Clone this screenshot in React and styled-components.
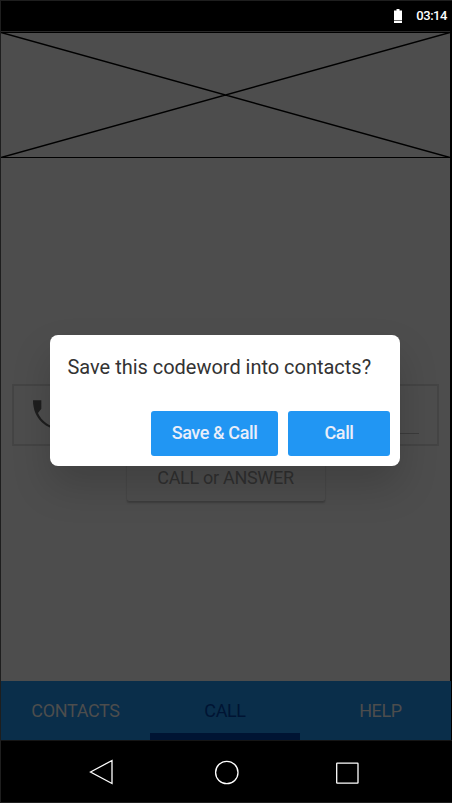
import React from "react";
import styled, { createGlobalStyle } from "styled-components";

const GlobalStyle = createGlobalStyle`
  *, *::before, *::after { box-sizing: border-box; }
  html, body { margin: 0; background: #000; }
  body { font-family: Roboto, sans-serif; overflow: hidden; }
  button { font-family: inherit; margin: 0; padding: 0; cursor: pointer; }
`;

const Phone = styled.div`
  position: relative;
  display: flex;
  flex-direction: column;
  width: 452px;
  height: 803px;
  background: #000;
  border-top: 1px solid #1e1e1e;
  border-bottom: 1px solid #1e1e1e;
  border-left: 1px solid #1e1e1e;
`;

const StatusBar = styled.header`
  display: flex;
  align-items: center;
  justify-content: flex-end;
  gap: 14px;
  height: 30px;
  padding: 0 5px 0 0;
  color: #fff;
  font-size: 13px;
  font-weight: 500;
  letter-spacing: -0.45px;
  line-height: 32px;
`;

const Battery = styled.svg`
  display: block;
  width: 8px;
  height: 14px;
`;

const Screen = styled.main`
  display: flex;
  flex-direction: column;
  width: 449px;
  height: 650px;
  background: #4d4d4d;
  border-top: 1px solid #292929;
`;

const Placeholder = styled.svg`
  display: block;
  width: 449px;
  height: 126px;
`;

const CodewordCard = styled.section`
  display: flex;
  align-items: flex-start;
  width: 427px;
  height: 62px;
  margin: 226px 0 0 11px;
  border: 2px solid #444;
`;

const CallIcon = styled.svg`
  flex: none;
  width: 40px;
  height: 40px;
  margin: 9px 0 0 14px;
  fill: #1e1e1e;
`;

const CodewordInput = styled.div`
  width: 351px;
  height: 48px;
  border-bottom: 1px solid #3b3b3b;
`;

const AnswerButton = styled.button`
  align-self: center;
  width: 198px;
  height: 46px;
  margin-top: 9px;
  border: 0;
  border-radius: 2px;
  background: #4d4d4d;
  color: #303030;
  font-size: 18px;
  font-weight: 400;
  letter-spacing: -0.3px;
  line-height: 46px;
  box-shadow: 0 2px 2px rgba(0, 0, 0, 0.22), 0 0 1px rgba(0, 0, 0, 0.12);
`;

const Tabs = styled.nav`
  display: grid;
  grid-template-columns: 149px 150px 151px;
  width: 450px;
  height: 59px;
  background: #0a2e4a;
`;

const Tab = styled.button`
  height: 59px;
  border: 0;
  border-bottom: 7px solid ${(p) => (p.$active ? "#001433" : "transparent")};
  padding-top: 7px;
  padding-left: ${(p) => p.$shift || 0}px;
  background: transparent;
  color: ${(p) => (p.$active ? "#001433" : "#4d4d4d")};
  font-size: 18px;
  font-weight: 400;
  letter-spacing: -0.35px;
`;

const SystemNav = styled.footer`
  flex: 1;
  border-top: 1px solid #151515;
`;

const NavIcons = styled.svg`
  display: block;
  width: 451px;
  height: 60px;
  fill: none;
  stroke: #fff;
  stroke-width: 1.3;
`;

const Dialog = styled.section`
  position: absolute;
  top: 334px;
  left: 49px;
  display: flex;
  flex-direction: column;
  justify-content: space-between;
  width: 350px;
  height: 131px;
  padding: 20px 10px 10px 17.5px;
  border-radius: 8px;
  background: #fff;
  box-shadow: 0 20px 38px rgba(0, 0, 0, 0.17);
`;

const Question = styled.h1`
  margin: 0;
  color: #333;
  font-size: 20px;
  font-weight: 400;
  letter-spacing: -0.02px;
  line-height: 24px;
  white-space: nowrap;
`;

const Actions = styled.div`
  display: flex;
  justify-content: flex-end;
  gap: 10px;
`;

const Action = styled.button`
  width: ${(p) => p.$width}px;
  height: 45px;
  border: 0;
  border-radius: 3px;
  background: #2196f3;
  color: #e9eefa;
  font-size: 18px;
  font-weight: 500;
  letter-spacing: -0.4px;
  line-height: 43px;
  padding-bottom: 2px;
`;

export default function App() {
  return (
    <>
      <GlobalStyle />
      <Phone>
        <StatusBar>
          <Battery viewBox="0 0 8 14">
            <path d="M2.5 0h3v1.5H8V11H0V1.5h2.5z" fill="#fff" />
            <path d="M0 11h8v1H0z" fill="#666" />
            <path d="M0 12h8v2H0z" fill="#fff" />
          </Battery>
          <span>03:14</span>
        </StatusBar>
        <Screen>
          <Placeholder viewBox="0 0 449 126">
            <path d="M0 .5H449M0 125.5H449" stroke="#000" fill="none" />
            <path
              d="M0 .5L449 125.5M0 125.5L449 .5"
              stroke="#000"
              strokeWidth="1.5"
              fill="none"
            />
          </Placeholder>
          <CodewordCard>
            <CallIcon viewBox="0 0 24 24">
              <path d="M3 3.2H8V8.2L6 10.8C7.4 14 10 16.8 13.5 18.3L16.5 16H21V21C11.2 21.2 3 14.5 3 3.2Z" />
            </CallIcon>
            <CodewordInput />
          </CodewordCard>
          <AnswerButton>CALL or ANSWER</AnswerButton>
        </Screen>
        <Tabs>
          <Tab>CONTACTS</Tab>
          <Tab $active>CALL</Tab>
          <Tab $shift={10}>HELP</Tab>
        </Tabs>
        <SystemNav>
          <NavIcons viewBox="0 0 451 60">
            <path d="M89.5 31L111 19.5v23z" />
            <circle cx="225.8" cy="31.5" r="11.2" />
            <rect x="335.7" y="22.2" width="21.3" height="20" rx="0.5" />
          </NavIcons>
        </SystemNav>
        <Dialog role="dialog" aria-label="Save this codeword into contacts?">
          <Question>Save this codeword into contacts?</Question>
          <Actions>
            <Action $width={127}>Save &amp; Call</Action>
            <Action $width={102}>Call</Action>
          </Actions>
        </Dialog>
      </Phone>
    </>
  );
}
